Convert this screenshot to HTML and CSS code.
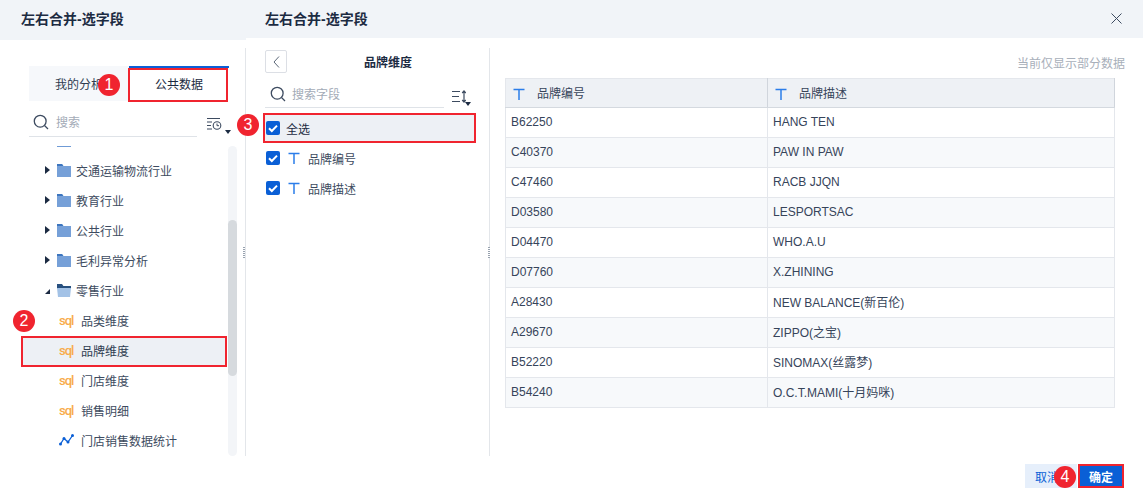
FILE: index.html
```html
<!DOCTYPE html>
<html lang="zh">
<head>
<meta charset="utf-8">
<title>左右合并-选字段</title>
<link rel="stylesheet" href="styles.css">
</head>
<body>
<svg class="defs" width="0" height="0" aria-hidden="true">
  <symbol id="i-search" viewBox="0 0 16 16"><circle cx="7.2" cy="7.2" r="5.9" fill="none" stroke="#3d4b60" stroke-width="1.3"/><path d="M11.5 11.5L15 15" stroke="#3d4b60" stroke-width="1.3" fill="none"/></symbol>
  <symbol id="i-folder" viewBox="0 0 14 13"><path d="M0 1.2C0 .5.5 0 1.2 0H5l1.4 2H14v11H0z" fill="#76a0d8"/><path d="M0 0h5l1.4 2H0z" fill="#3d76bf"/></symbol>
  <symbol id="i-open" viewBox="0 0 14 13"><path d="M0 0h5l1.4 2H14v3H0z" fill="#27507f"/><path d="M0 4h14l-1 9H1z" fill="#a3c2e6"/></symbol>
  <symbol id="i-t" viewBox="0 0 12 12"><path d="M.5 1.5h11M6 1.5V12" stroke="#2b7de9" stroke-width="1.5" fill="none"/></symbol>
  <symbol id="i-check" viewBox="0 0 14 14"><rect width="14" height="14" rx="2" fill="#0a5fd6"/><path d="M3 7.2l2.8 2.8L11 4.6" stroke="#fff" stroke-width="2" fill="none"/></symbol>
</svg>

<div class="app">
  <section class="back">
    <header class="back-head">左右合并-选字段</header>
    <div class="back-body">
      <div class="tabs">
        <div class="tab">我的分析</div>
        <div class="tab tab-on">公共数据</div>
        <span class="badge badge-1">1</span>
      </div>
      <div class="search-row">
        <label class="search search-back">
          <svg class="ic-search"><use href="#i-search"/></svg>
          <span class="ph">搜索</span>
        </label>
        <span class="filter">
          <svg width="15" height="14" viewBox="0 0 15 14"><path d="M0 1.500h13M0 5h5M0 8.500h4M0 12h5" stroke="#3d4b60" stroke-width="1.100" fill="none"/><circle cx="10" cy="8.500" r="3.800" fill="#fff" stroke="#3d4b60" stroke-width="1.100"/><path d="M10 6.500v2.200h2" stroke="#3d4b60" fill="none"/></svg>
          <i class="caret"></i>
        </span>
      </div>
      <div class="tree-wrap">
        <ul class="tree">
          <li class="stub"><i></i></li>
          <li class="row"><i class="arrow"></i><svg class="folder"><use href="#i-folder"/></svg>交通运输物流行业</li>
          <li class="row"><i class="arrow"></i><svg class="folder"><use href="#i-folder"/></svg>教育行业</li>
          <li class="row"><i class="arrow"></i><svg class="folder"><use href="#i-folder"/></svg>公共行业</li>
          <li class="row"><i class="arrow"></i><svg class="folder"><use href="#i-folder"/></svg>毛利异常分析</li>
          <li class="row"><i class="arrow arrow-open"></i><svg class="folder"><use href="#i-open"/></svg>零售行业</li>
          <li class="row leaf"><span class="sql">sql</span>品类维度</li>
          <li class="row leaf row-on"><span class="sql">sql</span>品牌维度</li>
          <li class="row leaf"><span class="sql">sql</span>门店维度</li>
          <li class="row leaf"><span class="sql">sql</span>销售明细</li>
          <li class="row leaf"><svg class="trend" viewBox="0 0 15 12"><path d="M1.500 10L5 4.500l4 3.500 4.500-6.500" fill="none" stroke="#0a5fd6" stroke-width="1.300"/><circle cx="1.500" cy="10" r="1.500" fill="#0a5fd6"/><circle cx="5" cy="4.500" r="1.500" fill="#0a5fd6"/><circle cx="9" cy="8" r="1.500" fill="#0a5fd6"/><circle cx="13.500" cy="1.500" r="1.500" fill="#0a5fd6"/></svg>门店销售数据统计</li>
        </ul>
        <div class="track"><div class="thumb"></div></div>
      </div>
      <span class="badge badge-2">2</span>
      <span class="grip"></span>
    </div>
  </section>

  <section class="dialog">
    <header class="dlg-head">
      <span>左右合并-选字段</span>
      <svg class="close" viewBox="0 0 11 11"><path d="M.5.5l10 10M10.500.5l-10 10" stroke="#3d4b60" fill="none"/></svg>
    </header>
    <div class="dlg-body">
      <div class="mid">
        <div class="mid-top">
          <span class="back-btn"><svg width="7" height="12" viewBox="0 0 7 12"><path d="M6 .5L1 6l5 5.500" stroke="#5c6879" fill="none"/></svg></span>
          <span class="mid-title">品牌维度</span>
        </div>
        <div class="search-row mid-search">
          <label class="search search-mid">
            <svg class="ic-search"><use href="#i-search"/></svg>
            <span class="ph">搜索字段</span>
          </label>
          <span class="sort">
            <svg width="14" height="13" viewBox="0 0 14 13"><path d="M0 1.500h8M0 6.500h7M0 11.500h8M12 1v11M10.200 3L12 1l1.800 2M10.200 10l1.800 2 1.800-2" stroke="#3d4b60" stroke-width="1.200" fill="none"/></svg>
            <i class="caret"></i>
          </span>
        </div>
        <ul class="fields">
          <li class="field field-on"><svg class="check"><use href="#i-check"/></svg>全选</li>
          <li class="field"><svg class="check"><use href="#i-check"/></svg><svg class="t"><use href="#i-t"/></svg>品牌编号</li>
          <li class="field"><svg class="check"><use href="#i-check"/></svg><svg class="t"><use href="#i-t"/></svg>品牌描述</li>
        </ul>
        <span class="badge badge-3">3</span>
        <span class="grip grip-mid"></span>
      </div>
      <div class="main">
        <p class="note">当前仅显示部分数据</p>
        <table class="grid">
          <thead>
            <tr><th><svg class="t"><use href="#i-t"/></svg>品牌编号</th><th><svg class="t"><use href="#i-t"/></svg>品牌描述</th></tr>
          </thead>
          <tbody>
            <tr><td>B62250</td><td>HANG TEN</td></tr>
            <tr><td>C40370</td><td>PAW IN PAW</td></tr>
            <tr><td>C47460</td><td>RACB JJQN</td></tr>
            <tr><td>D03580</td><td>LESPORTSAC</td></tr>
            <tr><td>D04470</td><td>WHO.A.U</td></tr>
            <tr><td>D07760</td><td>X.ZHINING</td></tr>
            <tr><td>A28430</td><td>NEW BALANCE(新百伦)</td></tr>
            <tr><td>A29670</td><td>ZIPPO(之宝)</td></tr>
            <tr><td>B52220</td><td>SINOMAX(丝露梦)</td></tr>
            <tr><td>B54240</td><td>O.C.T.MAMI(十月妈咪)</td></tr>
          </tbody>
        </table>
      </div>
    </div>
    <footer class="dlg-foot">
      <button class="btn btn-ghost">取消</button>
      <button class="btn btn-main">确定</button>
      <span class="badge badge-4">4</span>
    </footer>
  </section>
</div>
</body>
</html>
```

FILE: styles.css
```css
*, *::before, *::after { box-sizing: border-box; }
html, body { margin: 0; padding: 0; background: #fff; }
body {
  width: 1143px;
  height: 496px;
  overflow: hidden;
  font-family: "Liberation Sans", "Noto Sans CJK SC", sans-serif;
  font-size: 12px;
  color: #2f3d52;
}
ul { list-style: none; margin: 0; padding: 0; }
.defs { position: absolute; }
.app { display: flex; height: 496px; position: relative; }

.back { width: 246px; flex: none; }
.back-head {
  height: 40px;
  padding: 0 0 0 21px;
  background: #f1f4f8;
  line-height: 39px;
  font-size: 14px;
  font-weight: 700;
  color: #1c2b42;
}
.back-body {
  position: relative;
  height: 408px;
  margin-top: 8px;
  padding-top: 18px;
  border-right: 1px solid #e3e6ea;
}
.tabs { position: relative; display: flex; width: 200px; height: 35px; margin-left: 29px; }
.tab {
  width: 100px;
  background: #f6f8fb;
  line-height: 38px;
  text-align: center;
  color: #2f3d52;
}
.tab-on { position: relative; background: #fff; border-top: 2px solid #0a5fd6; line-height: 35px; color: #1c2b42; }
.tab-on::after {
  content: "";
  position: absolute;
  left: -1px;
  top: 0;
  width: 100px;
  height: 34px;
  border: 2px solid #f0242f;
}

.search-row { display: flex; align-items: center; }
.back-body > .search-row { height: 36px; margin-left: 29px; }
.search { display: flex; align-items: center; border-bottom: 1px solid #dfe3e8; }
.search-back { width: 168px; height: 30px; margin-top: 6px; padding-left: 4px; }
.ic-search { width: 16px; height: 16px; margin-right: 7px; }
.ph { color: #a3abb7; }
.filter { display: flex; align-self: flex-start; margin: 16px 0 0 10px; }
.caret {
  width: 0;
  height: 0;
  margin: 13px 0 0 3px;
  border: 3px solid transparent;
  border-top: 4px solid #1c2b42;
  border-bottom: 0;
}

.tree-wrap { display: flex; height: 310px; margin-top: 9px; padding-left: 21px; }
.tree { width: 206px; margin-right: 1px; overflow: hidden; }
.stub { height: 10px; }
.stub i { display: block; width: 14px; height: 1px; margin-left: 36px; background: #6f9bd6; }
.row { display: flex; align-items: center; height: 30px; padding: 0 0 2px 24px; color: #3d4b60; }
.arrow {
  width: 0;
  height: 0;
  margin-right: 7px;
  border-left: 5px solid #1c2b42;
  border-top: 4px solid transparent;
  border-bottom: 4px solid transparent;
}
.arrow-open {
  margin-top: 2px;
  border: 0;
  border-left: 5px solid transparent;
  border-bottom: 5px solid #1c2b42;
}
.folder { width: 14px; height: 13px; margin-right: 5px; }
.leaf { padding-left: 38px; }
.sql {
  width: 22px;
  font-family: Roboto, sans-serif;
  font-size: 13px;
  font-weight: 500;
  line-height: 1;
  letter-spacing: -1px;
  color: #f8ab4b;
}
.trend { width: 15px; height: 12px; margin-right: 7px; }
.row-on { position: relative; background: #edf0f5; color: #2f3d52; }
.row-on::after {
  content: "";
  position: absolute;
  left: 0;
  top: 0;
  width: 206px;
  height: 31px;
  border: 2px solid #f0242f;
}
.track { width: 9px; height: 310px; background: #f3f5f8; border-radius: 5px; }
.thumb { width: 9px; height: 156px; margin-top: 74px; background: #d6dade; border-radius: 5px; }

.grip {
  position: absolute;
  right: 0;
  top: 199px;
  width: 2px;
  height: 11px;
  background: repeating-linear-gradient(#98a2af 0 1px, #fff 1px 2px);
}
.grip-mid { right: -1px; }
.badge {
  position: absolute;
  z-index: 3;
  width: 22px;
  height: 22px;
  border-radius: 50%;
  background: #f0242f;
  color: #fff;
  font-size: 16px;
  line-height: 22px;
  text-align: center;
}
.badge-1 { left: 69px; top: 8px; }
.badge-2 { left: 13px; top: 262px; }
.badge-3 { left: -9px; top: 66px; }
.badge-4 { right: 67px; top: 10px; }

.dialog { flex: 1; display: flex; flex-direction: column; }
.dlg-head {
  display: flex;
  align-items: center;
  justify-content: space-between;
  height: 38px;
  padding: 0 21px 2px 19px;
  background: #f1f4f8;
  font-size: 14px;
  font-weight: 700;
  color: #1c2b42;
}
.close { width: 11px; height: 11px; }
.dlg-body { display: flex; height: 408px; margin-top: 10px; }
.mid {
  position: relative;
  width: 244px;
  padding-top: 2px;
  border-right: 1px solid #e3e6ea;
}
.mid-top { position: relative; display: flex; align-items: center; height: 23px; padding-left: 19px; }
.back-btn {
  display: flex;
  align-items: center;
  justify-content: center;
  width: 22px;
  height: 23px;
  border: 1px solid #dcdfe5;
  border-radius: 2px;
}
.mid-title { width: 160px; margin-left: 21px; text-align: center; font-weight: 700; color: #1c2b42; }
.mid-search { height: 35px; padding-left: 19px; }
.search-mid { width: 179px; height: 28px; margin-top: 7px; padding-left: 5px; }
.search-mid .ic-search { margin-right: 6px; }
.sort { display: flex; align-self: flex-start; margin: 17px 0 0 8px; }
.sort .caret { margin: 12px 0 0 -1px; }
.fields { padding-left: 17px; margin-top: 5px; }
.field { display: flex; align-items: center; width: 213px; height: 30px; padding-left: 3px; color: #3d4b60; }
.check { width: 14px; height: 14px; margin-right: 6px; }
.field .t { width: 12px; height: 12px; margin: 0 8px 0 2px; }
.field-on {
  background: #edf0f5;
  border: 2px solid #f0242f;
  padding-left: 1px;
  color: #1c2b42;
}

.main { flex: 1; padding-left: 15px; }
.note { height: 30px; margin: 0; padding: 1px 18px 0 0; line-height: 30px; text-align: right; color: #a8afba; }
.grid { width: 610px; border-collapse: collapse; table-layout: fixed; }
.grid th:first-child, .grid td:first-child { width: 262px; }
.grid th, .grid td {
  height: 30px;
  padding: 0 0 2px 5px;
  border: 1px solid #e4e7ec;
  text-align: left;
  font-weight: 400;
  color: #36445a;
}
.grid th { height: 29px; padding-left: 7px; background: #eef1f5; border-bottom-color: #d4d9df; border-right-color: #d0d5dc; }
.grid th .t { width: 12px; height: 12px; margin-right: 12px; vertical-align: -2px; }
.grid tbody tr:nth-child(even) td { background: #f7f9fb; }

.dlg-foot { position: relative; display: flex; justify-content: flex-end; gap: 1px; padding: 8px 19px 0 0; }
.btn { height: 24px; padding: 0; border: 0; font: inherit; font-size: 12px; }
.btn-ghost { width: 52px; padding-right: 8px; background: #e6effb; color: #0a5fd6; }
.btn-main { width: 46px; background: #0a5fd6; border: 2px solid #f0242f; color: #fff; font-weight: 700; }
```
